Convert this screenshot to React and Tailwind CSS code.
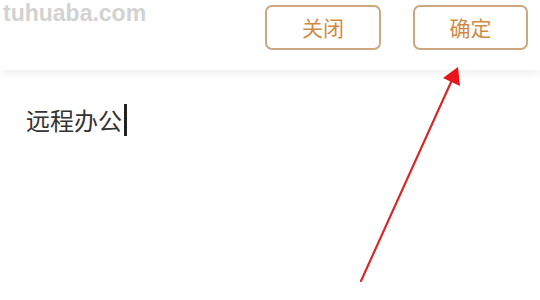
export default function App() {
  return (
    <div className="relative w-[540px] h-[300px] bg-white overflow-hidden" style={{ fontFamily: '"Noto Sans CJK SC", "Noto Sans", sans-serif' }}>
      <div className="relative h-[70px] flex items-start justify-end gap-[32px] pr-[12px] pt-[5px] shadow-[0_4px_8px_rgba(0,0,0,0.06)]">
        <button className="w-[116px] h-[45px] border-2 border-[#cda77f] rounded-[7px] text-[#d08a45] text-[21px] leading-none">关闭</button>
        <button className="w-[115px] h-[45px] border-2 border-[#cda77f] rounded-[7px] text-[#d08a45] text-[21px] leading-none">确定</button>
        <span className="absolute left-[3px] top-[-4px] text-[23px] font-bold text-[#d2d2d2]" style={{ fontFamily: '"Liberation Sans", sans-serif' }}>tuhuaba.com</span>
      </div>
      <div className="pl-[26px] pt-[34px] flex items-center">
        <span className="text-[24px] text-[#333] leading-none">远程办公</span>
        <span className="ml-[2px] w-[3px] h-[32px] bg-[#222]" />
      </div>
      <svg className="absolute left-0 top-0" width="540" height="300" viewBox="0 0 540 300">
        <line x1="361" y1="281" x2="452" y2="80" stroke="#d42a2a" strokeWidth="2.2" strokeLinecap="round" />
        <polygon points="458,67 460,86 443,78" fill="#e8141a" />
      </svg>
    </div>
  );
}
